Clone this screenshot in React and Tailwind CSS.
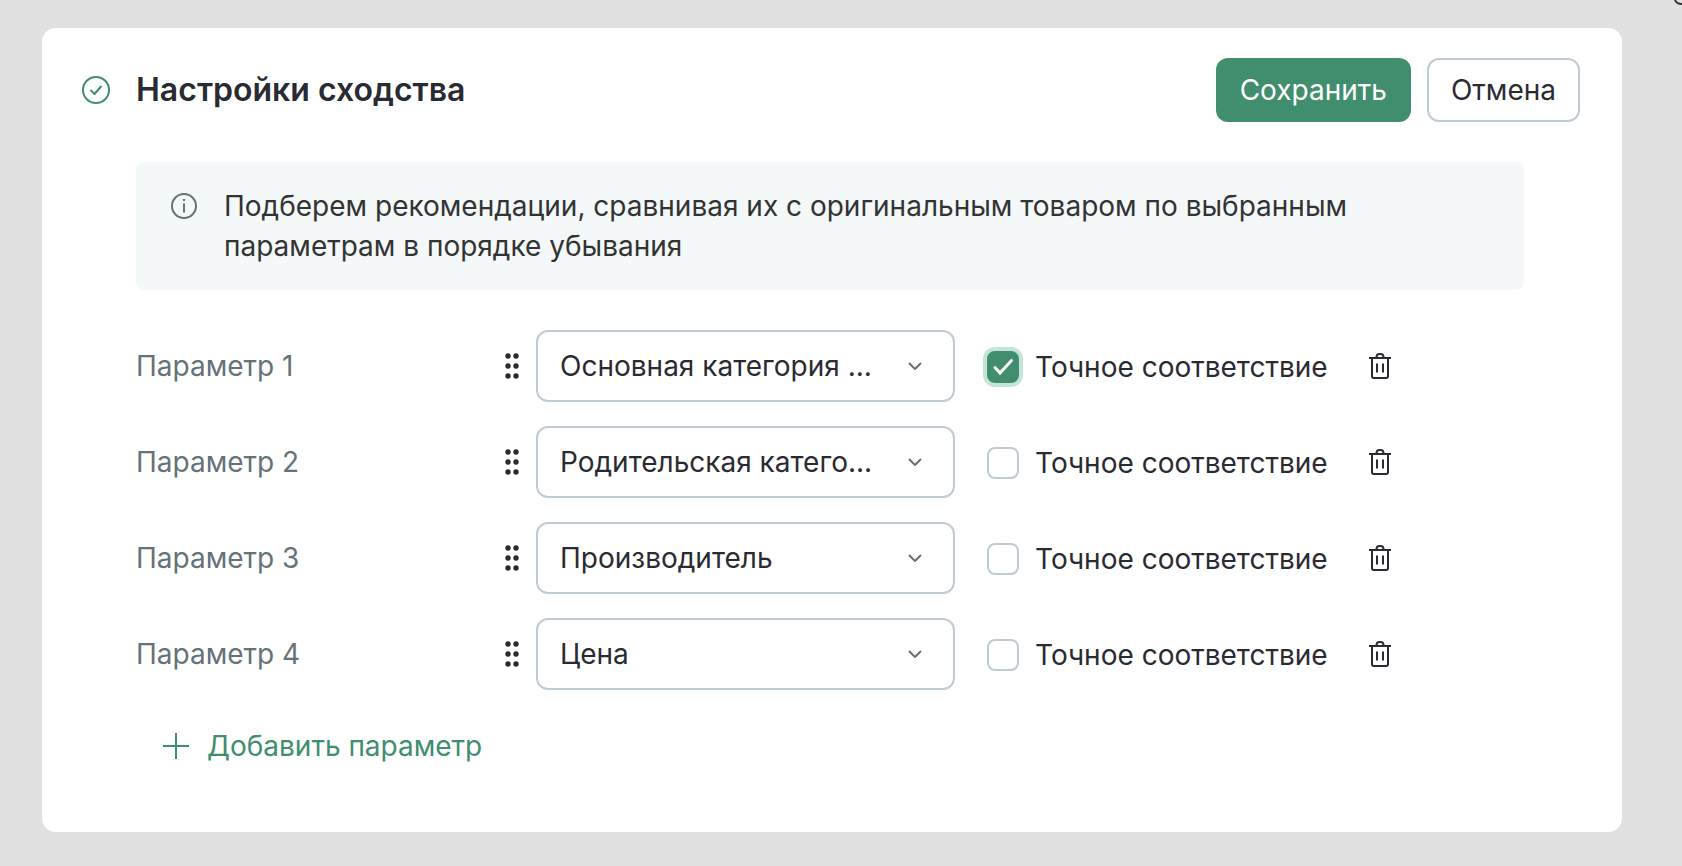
import { useState } from 'react';

const OPTIONS = ['Основная категория ...', 'Родительская катего...', 'Производитель', 'Цена'];

const INITIAL_PARAMS = [
  { id: 1, value: OPTIONS[0], exact: true },
  { id: 2, value: OPTIONS[1], exact: false },
  { id: 3, value: OPTIONS[2], exact: false },
  { id: 4, value: OPTIONS[3], exact: false },
];

function CheckCircleIcon() {
  return (
    <svg className="size-7 shrink-0 text-[#408e6d]" viewBox="0 0 28 28" fill="none" stroke="currentColor" strokeWidth="2">
      <circle cx="14" cy="14" r="13" />
      <path d="M8.5 14 12.5 18 19.5 10" strokeLinejoin="round" />
    </svg>
  );
}

function InfoIcon() {
  return (
    <svg className="mt-[7px] size-[26px] shrink-0 text-[#657279]" viewBox="0 0 26 26" fill="none" stroke="currentColor" strokeWidth="2">
      <circle cx="13" cy="13" r="12" />
      <path d="M13 10.5V19.5" />
      <path d="M13 6V8" />
    </svg>
  );
}

function GripIcon() {
  return (
    <svg className="h-[26px] w-3.5" viewBox="0 0 14 26" fill="currentColor">
      {[3, 13, 23].map((cy) => (
        <g key={cy}>
          <circle cx="3" cy={cy} r="2.7" />
          <circle cx="11" cy={cy} r="2.7" />
        </g>
      ))}
    </svg>
  );
}

function ChevronIcon() {
  return (
    <svg className="pointer-events-none absolute right-[33px] h-2 w-3.5 text-[#657279]" viewBox="0 0 14 8" fill="none" stroke="currentColor" strokeWidth="2">
      <path d="M1 1 7 7 13 1" />
    </svg>
  );
}

function TrashIcon() {
  return (
    <svg className="h-[26px] w-[22px]" viewBox="0 0 22 26" fill="none" stroke="currentColor" strokeWidth="2">
      <path d="M0 5H22" />
      <path d="M7.5 5V4A3 3 0 0 1 10.500 1H11.500A3 3 0 0 1 14.500 4V5" />
      <path d="M3 5V23A2 2 0 0 0 5 25H17A2 2 0 0 0 19 23V5" />
      <path d="M8 10.5V19.5M14 10.5V19.5" />
    </svg>
  );
}

function ParamRow({ index, param, onChange, onRemove }) {
  const selectId = `param-${param.id}`;
  const checkId = `exact-${param.id}`;

  return (
    <div className="flex items-center">
      <label htmlFor={selectId} className="w-[369px] shrink-0 text-[#657279]">
        Параметр {index + 1}
      </label>
      <button type="button" aria-label="Переместить" className="shrink-0 cursor-grab">
        <GripIcon />
      </button>

      {/* Выбор параметра */}
      <div className="relative ml-[17px] flex w-[419px] shrink-0 items-center">
        <select
          id={selectId}
          value={param.value}
          onChange={(e) => onChange({ value: e.target.value })}
          className="h-[72px] w-full appearance-none truncate rounded-xl border-2 border-[#bfcbd5] bg-white pl-[22px] pr-20 focus:outline-none"
        >
          {OPTIONS.map((option) => (
            <option key={option}>{option}</option>
          ))}
        </select>
        <ChevronIcon />
      </div>

      {/* Точное соответствие */}
      <div className="ml-8 flex shrink-0 items-center gap-4 pt-0.5">
        <span className="relative flex size-8">
          <input
            id={checkId}
            type="checkbox"
            checked={param.exact}
            onChange={(e) => onChange({ exact: e.target.checked })}
            className="size-8 appearance-none rounded-lg border-2 border-[#bfcbd5] bg-white checked:border-[#408e6d] checked:bg-[#408e6d] checked:ring-4 checked:ring-[#c3e5d8]"
          />
          {param.exact && (
            <svg className="pointer-events-none absolute inset-0 size-8 text-white" viewBox="0 0 32 32" fill="none" stroke="currentColor" strokeWidth="3">
              <path d="M8 16.5 13 22 24.500 9.500" strokeLinecap="round" />
            </svg>
          )}
        </span>
        <label htmlFor={checkId}>Точное соответствие</label>
      </div>

      <button type="button" aria-label="Удалить" onClick={onRemove} className="ml-[41px] shrink-0">
        <TrashIcon />
      </button>
    </div>
  );
}

export default function App() {
  const [params, setParams] = useState(INITIAL_PARAMS);

  const updateParam = (id, patch) => {
    setParams(prev => prev.map(p => (p.id === id ? { ...p, ...patch } : p)));
  };

  const removeParam = (id) => {
    setParams(prev => prev.filter(p => p.id !== id));
  };

  const addParam = () => {
    setParams(prev => [...prev, { id: Date.now(), value: OPTIONS[0], exact: false }]);
  };

  return (
    <div className="relative min-h-screen overflow-hidden bg-[#e1e1e1] pt-7 pr-[60px] pb-[34px] pl-[42px] font-['Inter',sans-serif] text-[28px] leading-10 text-[#2a2b32]">
      {/* Край кнопки закрытия */}
      <svg className="absolute top-0 right-0 h-1.5 w-2" viewBox="0 0 8 6" fill="none" stroke="#333" strokeWidth="2">
        <path d="M1 0C2 3 4 4 8 4" />
      </svg>

      <main className="rounded-[14px] bg-white pt-[30px] pb-[66px]">
        {/* Заголовок */}
        <header className="flex items-center pr-[42px] pl-10">
          <CheckCircleIcon />
          <h1 className="ml-[26px] flex-1 text-[32px] font-semibold">Настройки сходства</h1>
          <div className="flex gap-4">
            <button type="button" className="h-16 rounded-xl bg-[#408e6d] px-6 text-white">
              Сохранить
            </button>
            <button type="button" className="h-16 rounded-xl border-2 border-[#bfcbd5] px-[22px]">
              Отмена
            </button>
          </div>
        </header>

        <div className="mt-10 pr-[98px] pl-[94px]">
          {/* Подсказка */}
          <div className="flex gap-[27px] rounded-lg bg-[#f4f8f9] py-6 pr-24 pl-[35px] text-[#333]">
            <InfoIcon />
            <p>
              Подберем рекомендации, сравнивая их с оригинальным товаром по выбранным параметрам в порядке убывания
            </p>
          </div>

          {/* Параметры */}
          <div className="mt-10 flex flex-col gap-6">
            {params.map((param, index) => (
              <ParamRow
                key={param.id}
                index={index}
                param={param}
                onChange={(patch) => updateParam(param.id, patch)}
                onRemove={() => removeParam(param.id)}
              />
            ))}
          </div>

          <button type="button" onClick={addParam} className="mt-9 ml-[27px] flex items-center gap-[18px] text-[#408e6d]">
            <svg className="size-[26px]" viewBox="0 0 26 26" fill="none" stroke="currentColor" strokeWidth="2">
              <path d="M13 0V26M0 13H26" />
            </svg>
            Добавить параметр
          </button>
        </div>
      </main>
    </div>
  );
}
